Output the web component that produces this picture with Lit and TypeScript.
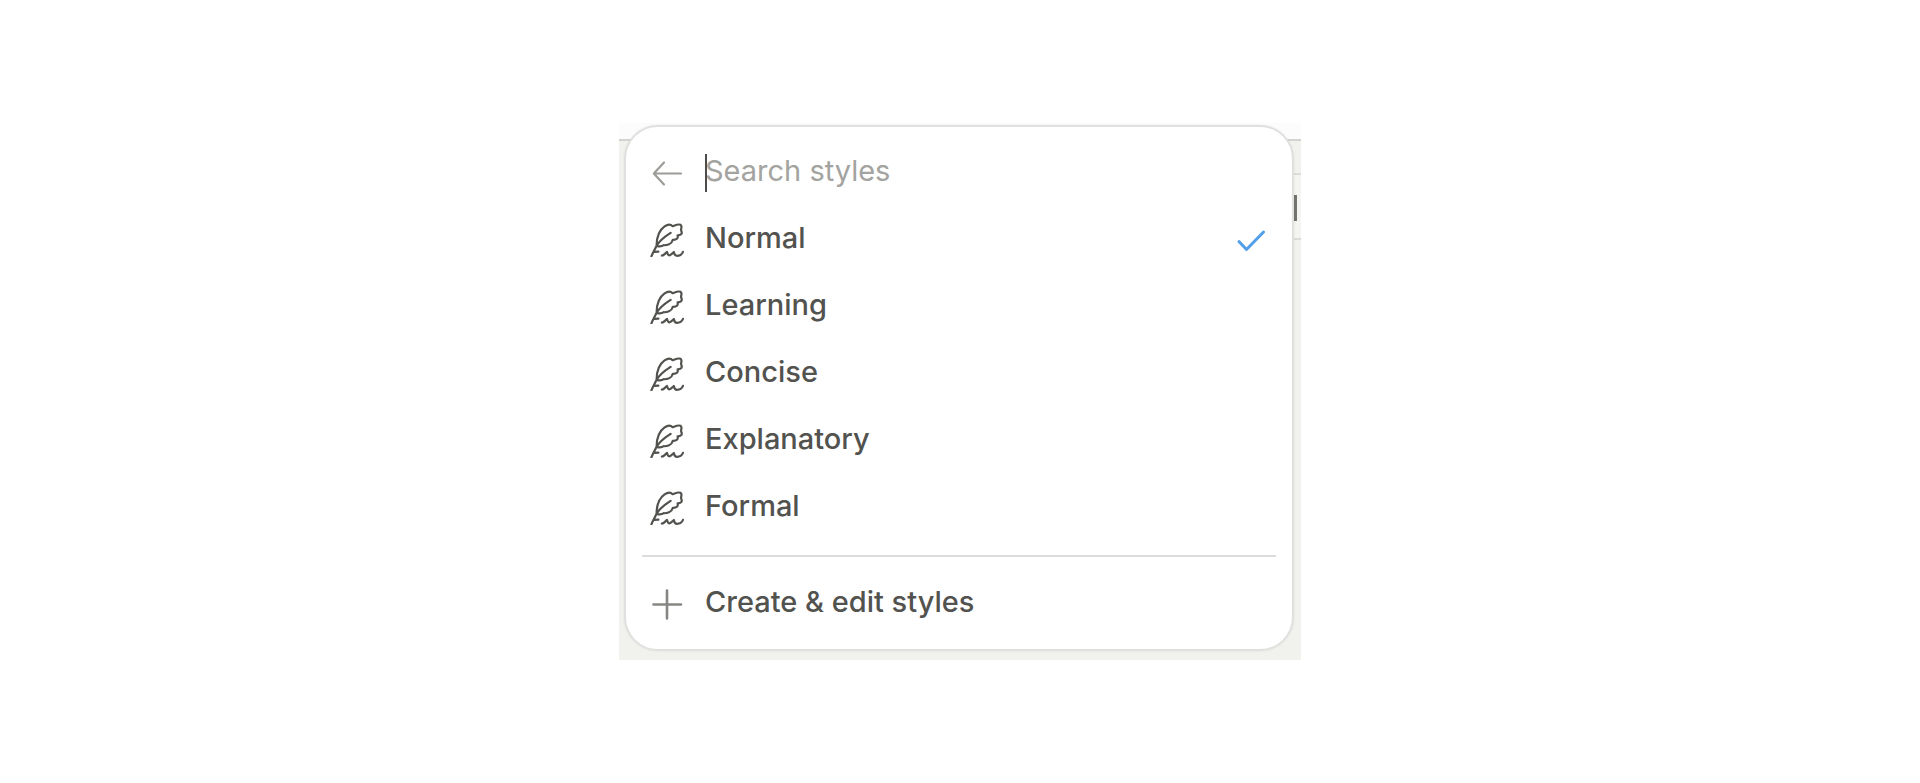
import { LitElement, html, css, svg } from "lit";
import { customElement, state } from "lit/decorators.js";

const feather = svg`
  <path d="M1.4 33.4 C3.2 28.6 5 26.4 6.6 22.6 C6.6 14.6 8.6 7.6 14.6 3.4 C17.4 1.4 20.6 1 22.6 3.2 C25 2.6 27.4 .6 30.6 1.8 C32.8 3.6 30.2 6 31.4 8.2 C32.6 10.8 30.6 12.4 27.6 12.4 C28.4 15.2 26.6 17 22.8 16.8 C21.8 20.8 17.4 22.4 13.8 22.2 C11.4 24 8.8 23.6 6.6 23 M6.6 22.8 C9.4 17.2 14.4 13.8 20.6 9.8 M4.4 28.8 L8.4 28.6"/>
  <path d="M11.8 32.6 C14 32.6 15 30.4 17 29 C17.6 31 18.2 32.4 19.4 32.4 C21.2 32.4 22 30.4 23.8 29 C24.2 31.4 25 32.8 27 32.8 C29.8 32.8 32 31.2 33 28.8"/>`;
const arrow = svg`<path d="M31 17.5 H4 M14 6.5 L3.8 17.5 L14 28.5"/>`;
const plus = svg`<path d="M17 3.5 V31.5 M3.5 17.5 H31"/>`;
const check = svg`<path d="M5 18.5 L12.5 26.5 L29.5 9"/>`;

@customElement("app-root")
export class AppRoot extends LitElement {
  static styles = css`
    :host {
      display: flex;
      align-items: center;
      justify-content: center;
      min-height: 100vh;
      background: #fff;
      font-family: Inter, "Liberation Sans", sans-serif;
      font-size: 29px;
      line-height: 36px;
      color: #52524f;
    }
    * {
      box-sizing: border-box;
    }
    .scene {
      position: relative;
      width: 100%;
      max-width: 682px;
      padding: 2px 7px 9px 5px;
      background: #f1f1ed;
    }
    .topband {
      position: absolute;
      inset: 0 0 auto 0;
      height: 18px;
      background: #fcfcfc;
      border-bottom: 2px solid #d3d3d1;
    }
    .field {
      position: absolute;
      right: 0;
      top: 50px;
      width: 24px;
      height: 67px;
      background: #f4f4f1;
      border: solid #dcdcd8;
      border-width: 2px 0;
    }
    .mark {
      position: absolute;
      right: 4px;
      top: 20px;
      width: 3px;
      height: 26px;
      background: #73736f;
    }
    .panel {
      position: relative;
      padding: 12px 16px;
      background: #fff;
      border: 2px solid #e0e0df;
      border-radius: 34px;
      box-shadow: 0 0 3px rgba(0, 0, 0, 0.06);
    }
    .list {
      list-style: none;
      margin: 0;
      padding: 0;
    }
    .row {
      display: flex;
      align-items: center;
      gap: 20px;
      width: 100%;
      height: 67px;
      padding: 0 8px;
      border: 0;
      background: none;
      color: inherit;
      font: inherit;
      text-align: left;
    }
    button {
      cursor: pointer;
    }
    .back {
      padding: 0;
      border: 0;
      background: none;
      color: #9c9c98;
    }
    .icon {
      display: block;
      flex: none;
      width: 34px;
      height: 34px;
      fill: none;
      stroke: currentColor;
      stroke-width: 2.2;
      stroke-linecap: round;
      stroke-linejoin: round;
    }
    .plus {
      color: #868683;
      stroke-width: 2.6;
    }
    .check {
      color: #539fe9;
      stroke-width: 3;
    }
    .label {
      flex: 1;
      padding: 0 0 3px 1px;
      font-weight: 500;
    }
    .search {
      position: relative;
      flex: 1;
      display: flex;
    }
    .input {
      width: 100%;
      height: 40px;
      padding: 0 0 4px 1px;
      border: 0;
      outline: 0;
      background: none;
      color: inherit;
      font: inherit;
      caret-color: transparent;
    }
    .input::placeholder {
      color: #a3a3a0;
      opacity: 1;
    }
    .caret {
      position: absolute;
      left: 1px;
      top: 1px;
      width: 2px;
      height: 38px;
      background: #4c4c4a;
    }
    .divider {
      height: 2px;
      margin: 14px 0 13px;
      border: 0;
      background: #dcdcdb;
    }
  `;

  @state() private selected = "Normal";
  private names = ["Normal", "Learning", "Concise", "Explanatory", "Formal"];

  private icon(shape: unknown, extra = "") {
    return html`<svg class="icon ${extra}" viewBox="0 0 34 34" aria-hidden="true">${shape}</svg>`;
  }

  render() {
    return html`
      <main class="scene">
        <div class="topband"></div>
        <div class="field"><div class="mark"></div></div>
        <div class="panel">
          <div class="row">
            <button class="back" aria-label="Back">${this.icon(arrow)}</button>
            <div class="search">
              <input class="input" type="text" aria-label="Search styles" placeholder="Search styles" />
              <span class="caret"></span>
            </div>
          </div>
          <ul class="list">
            ${this.names.map(
              (name) => html`<li>
                <button class="row" aria-pressed=${name === this.selected} @click=${() => (this.selected = name)}>
                  ${this.icon(feather)}
                  <span class="label">${name}</span>
                  ${name === this.selected ? this.icon(check, "check") : null}
                </button>
              </li>`
            )}
          </ul>
          <hr class="divider" />
          <button class="row">
            ${this.icon(plus, "plus")}
            <span class="label">Create &amp; edit styles</span>
          </button>
        </div>
      </main>
    `;
  }
}
